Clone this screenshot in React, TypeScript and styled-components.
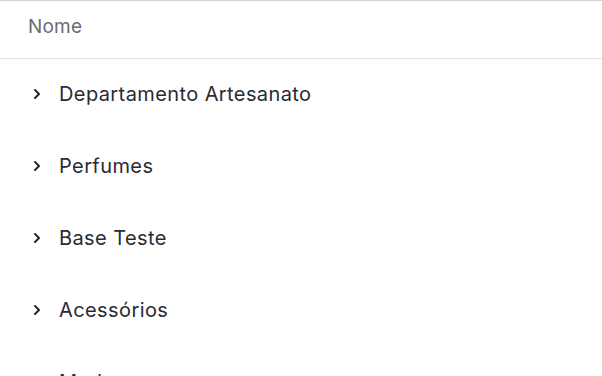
import styled, { createGlobalStyle } from "styled-components";

const GlobalStyle = createGlobalStyle`
    html, body {
        margin: 0;
        padding: 0;
        background: #ffffff;
        overflow: hidden;
    }
    body {
        font-family: Inter, "Noto Sans", sans-serif;
    }
`;

const Table = styled.div`
    width: 100%;
    border-top: 1px solid #d4d4d8;
`;

const HeaderRow = styled.div`
    display: flex;
    align-items: center;
    height: 58px;
    box-sizing: border-box;
    padding-left: 28px;
    padding-bottom: 7px;
    border-bottom: 1px solid #e4e4e7;
`;

const HeaderCell = styled.span`
    font-size: 19px;
    color: #6b6b73;
    letter-spacing: 0.2px;
`;

const Row = styled.div`
    display: flex;
    align-items: center;
    height: 72px;
    padding-left: 29px;
    padding-bottom: 2px;
    box-sizing: border-box;
    gap: 14px;
`;

const Chevron = styled.svg`
    width: 16px;
    height: 16px;
    flex-shrink: 0;
    color: #27272a;
`;

const Name = styled.span`
    font-size: 20px;
    color: #2a2a33;
    letter-spacing: 0.4px;
`;

const items = ["Departamento Artesanato", "Perfumes", "Base Teste", "Acessórios", "Moda"];

export default function App() {
    return (
        <>
            <GlobalStyle />
            <Table>
                <HeaderRow>
                    <HeaderCell>Nome</HeaderCell>
                </HeaderRow>
                {items.map(item => (
                    <Row key={item}>
                        <Chevron viewBox="0 0 24 24" fill="none" stroke="currentColor" strokeWidth="3" strokeLinecap="round" strokeLinejoin="round">
                            <path d="M9 6l6 6-6 6" />
                        </Chevron>
                        <Name>{item}</Name>
                    </Row>
                ))}
            </Table>
        </>
    );
}
